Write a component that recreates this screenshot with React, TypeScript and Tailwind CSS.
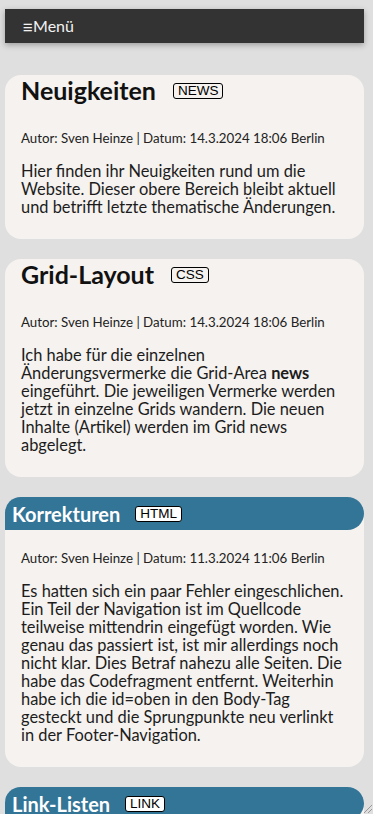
import React from 'react'

type Post = {
  title: string
  tag: string
  meta: string
  lines: React.ReactNode[]
  banner?: boolean
}

const posts: Post[] = [
  {
    title: 'Neuigkeiten',
    tag: 'NEWS',
    meta: 'Autor: Sven Heinze | Datum: 14.3.2024 18:06 Berlin',
    lines: [
      'Hier finden ihr Neuigkeiten rund um die',
      'Website. Dieser obere Bereich bleibt aktuell',
      'und betrifft letzte thematische Änderungen.',
    ],
  },
  {
    title: 'Grid-Layout',
    tag: 'CSS',
    meta: 'Autor: Sven Heinze | Datum: 14.3.2024 18:06 Berlin',
    lines: [
      'Ich habe für die einzelnen',
      <>
        Änderungsvermerke die Grid-Area <b>news</b>
      </>,
      'eingeführt. Die jeweiligen Vermerke werden',
      'jetzt in einzelne Grids wandern. Die neuen',
      'Inhalte (Artikel) werden im Grid news',
      'abgelegt.',
    ],
  },
  {
    title: 'Korrekturen',
    tag: 'HTML',
    banner: true,
    meta: 'Autor: Sven Heinze | Datum: 11.3.2024 11:06 Berlin',
    lines: [
      'Es hatten sich ein paar Fehler eingeschlichen.',
      'Ein Teil der Navigation ist im Quellcode',
      'teilweise mittendrin eingefügt worden. Wie',
      'genau das passiert ist, ist mir allerdings noch',
      'nicht klar. Dies Betraf nahezu alle Seiten. Die',
      'habe das Codefragment entfernt. Weiterhin',
      'habe ich die id=oben in den Body-Tag',
      'gesteckt und die Sprungpunkte neu verlinkt',
      'in der Footer-Navigation.',
    ],
  },
  {
    title: 'Link-Listen',
    tag: 'LINK',
    banner: true,
    meta: 'Autor: Sven Heinze | Datum: 10.3.2024 12:00 Berlin',
    lines: ['Hier entstehen Listen mit nützlichen Links.'],
  },
]

const Tag = ({ label, light }: { label: string; light?: boolean }) => (
  <span
    className={`inline-block rounded-[3px] border border-black px-[4px] text-[13.5px] font-normal leading-[14px] text-black font-['Liberation_Sans',Arial,sans-serif] ${
      light ? 'bg-white' : ''
    }`}
  >
    {label}
  </span>
)

const PostCard = ({ title, tag, meta, lines, banner }: Post) => {
  return (
    <article className="rounded-2xl bg-[#f5f2ef] pb-[23px]">
      {banner ? (
        <h2 className="flex h-[33px] items-center gap-[15px] rounded-tl-2xl rounded-r-[17px] bg-[#337597] pl-[7px] text-[20px] font-bold text-white">
          {title}
          <Tag label={tag} light />
        </h2>
      ) : (
        <h2 className="flex h-[30px] items-center gap-[17px] px-[16px] pt-[1px] text-[25px] font-bold text-[#111]">
          {title}
          <Tag label={tag} />
        </h2>
      )}
      <p
        className={`px-[16px] text-[13.3px] leading-[16px] text-[#222] ${
          banner ? 'mt-[20px]' : 'mt-[25px]'
        }`}
      >
        {meta}
      </p>
      <p className="mt-[16px] whitespace-nowrap px-[16px] text-[16.4px] leading-[18px] text-[#1c1c1c]">
        {lines.map((line, i) => (
          <React.Fragment key={i}>
            {line}
            {i < lines.length - 1 && <br />}
          </React.Fragment>
        ))}
      </p>
    </article>
  )
}

export default function App() {
  return (
    <div className="min-h-screen overflow-hidden bg-[#e0dfe0] pt-[9px] font-['Lato','Liberation_Sans',sans-serif]">
      <nav className="ml-[5px] mr-[9px] flex h-[34px] items-center bg-[#333] pl-[17px] text-[16px] text-[#f2f2f2] shadow-[0_2px_6px_rgba(0,0,0,0.3)]">
        <span className="text-[19px] leading-none">≡</span>Menü
      </nav>

      <main className="ml-[5px] mr-[9px] mt-[32px] flex flex-col gap-[20px]">
        {posts.map((post) => (
          <PostCard key={post.title} {...post} />
        ))}
      </main>

      <svg className="fixed bottom-0 right-0" width="12" height="12" viewBox="0 0 12 12">
        <path d="M11 3 L3 11 M11 7 L7 11" stroke="#999" strokeWidth="1" />
      </svg>
    </div>
  )
}
